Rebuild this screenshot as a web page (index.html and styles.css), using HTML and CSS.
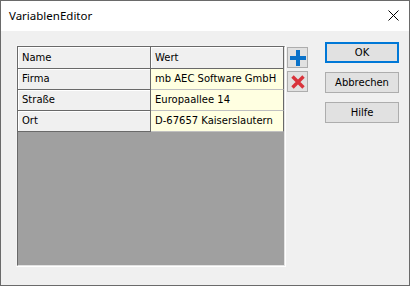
FILE: index.html
```html
<!DOCTYPE html>
<html>
<head>
    <title>VariablenEditor</title>
    <link rel="stylesheet" href="styles.css">
</head>
<body>
    <div class="window">
        <div class="titlebar">
            <span class="title">VariablenEditor</span>
            <svg class="close" width="11" height="11" viewBox="0 0 11 11">
                <path d="M0.5 0.5 L10.5 10.5 M10.5 0.5 L0.5 10.5" stroke="#000" stroke-width="1" fill="none"/>
            </svg>
        </div>
        <div class="content">
            <div class="grid-frame">
                <div class="grid-inner">
                    <div class="grid">
                        <div class="cell head">Name</div>
                        <div class="cell head">Wert</div>
                        <div class="cell key">Firma</div>
                        <div class="cell value">mb AEC Software GmbH</div>
                        <div class="cell key">Straße</div>
                        <div class="cell value">Europaallee 14</div>
                        <div class="cell key">Ort</div>
                        <div class="cell value">D-67657 Kaiserslautern</div>
                    </div>
                </div>
            </div>
            <div class="tools">
                <button class="tool-button" title="Hinzufügen">
                    <svg width="16" height="16" viewBox="0 0 16 16">
                        <rect x="6" y="0" width="4" height="16" fill="#0a72c9"/>
                        <rect x="0" y="6" width="16" height="4" fill="#0a72c9"/>
                    </svg>
                </button>
                <button class="tool-button" title="Löschen">
                    <svg width="14" height="14" viewBox="0 0 14 14">
                        <path d="M1.5 1.5 L12.5 12.5 M12.5 1.5 L1.5 12.5" stroke="#d9333b" stroke-width="3.4" fill="none"/>
                    </svg>
                </button>
            </div>
            <div class="actions">
                <button class="dlg-button default">OK</button>
                <button class="dlg-button">Abbrechen</button>
                <button class="dlg-button">Hilfe</button>
            </div>
        </div>
    </div>
</body>
</html>
```

FILE: styles.css
```css
body {
    margin: 0;
    padding: 0;
    font-family: "DejaVu Sans", sans-serif;
    font-size: 10px;
    color: #000;
}
.window {
    width: 410px;
    height: 286px;
    box-sizing: border-box;
    border: 1px solid #6a6a6a;
    background-color: #f0f0f0;
    display: flex;
    flex-direction: column;
}
.titlebar {
    height: 30px;
    background-color: #fff;
    display: flex;
    align-items: center;
    justify-content: space-between;
    padding: 0 10px 0 8px;
}
.title {
    font-family: "Noto Sans", sans-serif;
    font-size: 11.5px;
    margin-top: -1px;
}
.close {
    display: block;
    margin-top: -1px;
}
.content {
    display: flex;
    padding: 14px 0 0 15px;
}
.grid-frame {
    width: 270px;
    height: 222px;
    box-sizing: border-box;
    border: 1px solid;
    border-color: #f4f4f4 #fff #fff #f4f4f4;
}
.grid-inner {
    height: 100%;
    box-sizing: border-box;
    border: 1px solid;
    border-color: #696969 #e3e3e3 #e3e3e3 #696969;
    background-color: #a0a0a0;
}
.grid {
    display: grid;
    grid-template-columns: 133px 133px;
    grid-template-rows: 22px 21px 21px 21px;
}
.cell {
    box-sizing: border-box;
    padding: 4px 0 0 4px;
    white-space: nowrap;
    overflow: hidden;
    border-right: 1px solid #696969;
    border-bottom: 1px solid #696969;
}
.head {
    background-color: #f0f0f0;
    box-shadow: inset 1px 1px 0 #fff;
    padding-top: 5px;
}
.key {
    background-color: #f0f0f0;
    box-shadow: inset 1px 1px 0 #fff;
}
.value {
    background-color: #ffffe1;
    border-bottom-color: #c0c0c0;
}
.tools {
    display: flex;
    flex-direction: column;
    gap: 3px;
    margin: 2px 0 0 1px;
}
.tool-button {
    width: 21px;
    height: 21px;
    padding: 0;
    border: 1px solid #adadad;
    background-color: #e1e1e1;
    display: flex;
    align-items: center;
    justify-content: center;
}
.actions {
    display: flex;
    flex-direction: column;
    gap: 9px;
    margin: -3px 0 0 17px;
}
.dlg-button {
    width: 74px;
    height: 21px;
    padding: 0;
    box-sizing: border-box;
    border: 1px solid #adadad;
    background-color: #e1e1e1;
    font-family: "DejaVu Sans", sans-serif;
    font-size: 10px;
    color: #000;
}
.dlg-button.default {
    border: 2px solid #0078d7;
}
```
